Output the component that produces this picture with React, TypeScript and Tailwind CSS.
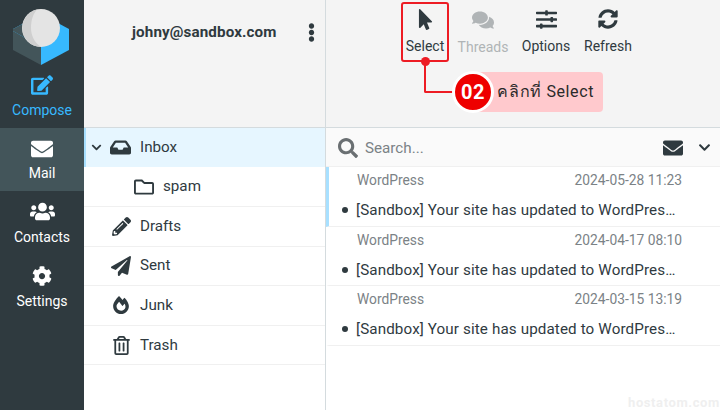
import React from "react";
import {
  FaEdit,
  FaEnvelope,
  FaUsers,
  FaCog,
  FaInbox,
  FaRegFolder,
  FaPencilAlt,
  FaPaperPlane,
  FaFireAlt,
  FaRegTrashAlt,
  FaMousePointer,
  FaComments,
  FaSlidersH,
  FaSyncAlt,
  FaSearch,
  FaChevronDown,
  FaEllipsisV,
} from "react-icons/fa";

const folders = [
  { name: "Drafts", icon: FaPencilAlt, size: 19 },
  { name: "Sent", icon: FaPaperPlane, size: 20 },
  { name: "Junk", icon: FaFireAlt, size: 18 },
  { name: "Trash", icon: FaRegTrashAlt, size: 19 },
];

const messages = [
  { date: "2024-05-28 11:23", selected: true },
  { date: "2024-04-17 08:10", selected: false },
  { date: "2024-03-15 13:19", selected: false },
];

const Logo = () => (
  <svg width="84" height="62" viewBox="0 0 84 62" className="block">
    <path d="M13 25 L41 40 L41 61 L13 46 Z" fill="#43555a" />
    <path d="M69 25 L41 40 L41 61 L69 46 Z" fill="#37b9ff" />
    <path d="M41 43 L13 27 L13 25 L41 10 L69 25 L69 27 Z" fill="#37b9ff" />
    <path d="M41 43 L13 27 L13 25 L30 16 L41 30 Z" fill="#43555a" />
    <circle cx="41" cy="24" r="19" fill="#e4e4e4" />
    <path d="M37 5.5 A19 19 0 0 0 41 43 C34 38 31 31 31 24 C31 16 33 10 37 5.5 Z" fill="#cfcfcf" />
  </svg>
);

export default function App() {
  return (
    <div className="relative flex h-[410px] w-[720px] overflow-hidden bg-white font-['Roboto',sans-serif] text-[#2f3a3f]">
      {/* Sidebar */}
      <div className="flex w-[84px] shrink-0 flex-col bg-[#2f3a3f] pt-[4px] text-white">
        <Logo />
        <div className="mt-[8px] flex h-[54px] flex-col items-center text-[#37b9ff]">
          <FaEdit size={22} />
          <span className="mt-[4px] text-[14px] leading-[20px]">Compose</span>
        </div>
        <div className="flex h-[63px] flex-col items-center bg-[#43555a] pt-[10px]">
          <FaEnvelope size={22} />
          <span className="mt-[3px] text-[14px] leading-[20px]">Mail</span>
        </div>
        <div className="flex h-[64px] flex-col items-center pt-[8px]">
          <FaUsers size={25} />
          <span className="mt-[3px] text-[14px] leading-[20px]">Contacts</span>
        </div>
        <div className="flex flex-col items-center pt-[11px]">
          <FaCog size={20} />
          <span className="mt-[5px] text-[14px] leading-[20px]">Settings</span>
        </div>
      </div>

      {/* Folder column */}
      <div className="flex w-[242px] shrink-0 flex-col border-r border-[#d4dbde]">
        <div className="flex h-[128px] shrink-0 border-b border-[#d4dbde] bg-[#f4f4f4]">
          <div className="flex h-[64px] flex-1 items-center justify-between pl-[48px] pr-[4px]">
            <span className="pt-[1px] text-[15.2px] font-bold leading-none tracking-[0.12px]">johny@sandbox.com</span>
            <FaEllipsisV size={19} className="mt-[1px]" />
          </div>
        </div>
        <div className="flex h-[39px] items-center border-l-[2px] border-[#a8e0ff] bg-[#e6f6ff] pl-[5px]">
          <FaChevronDown size={11} />
          <FaInbox size={21} className="ml-[8px]" />
          <span className="ml-[9px] text-[15.2px]">Inbox</span>
        </div>
        <div className="flex h-[40px] items-center border-b border-[#f0f0f0] pl-[50px]">
          <FaRegFolder size={20} />
          <span className="ml-[9px] text-[15.2px]">spam</span>
        </div>
        {folders.map((f) => (
          <div key={f.name} className="flex h-[39.6px] items-center border-b border-[#f0f0f0]">
            <span className="flex w-[56px] justify-center pl-[18px]">
              <f.icon size={f.size} />
            </span>
            <span className="text-[15.2px]">{f.name}</span>
          </div>
        ))}
      </div>

      {/* Message column */}
      <div className="flex min-w-0 flex-1 flex-col">
        <div className="flex h-[128px] shrink-0 justify-center gap-[14px] border-b border-[#d4dbde] bg-[#f4f4f4] pl-[2px] pr-[10px] pt-[9px]">
          <div className="flex w-[38px] flex-col items-center">
            <FaMousePointer size={21} />
            <span className="mt-[6px] text-[14px] leading-[20px]">Select</span>
          </div>
          <div className="flex w-[50px] flex-col items-center text-[#b0b4b6]">
            <FaComments size={22} />
            <span className="mt-[6px] text-[14px] leading-[20px]">Threads</span>
          </div>
          <div className="flex w-[48px] flex-col items-center">
            <FaSlidersH size={21} />
            <span className="mt-[6px] text-[14px] leading-[20px]">Options</span>
          </div>
          <div className="flex w-[48px] flex-col items-center">
            <FaSyncAlt size={20} />
            <span className="mt-[7px] text-[14px] leading-[20px]">Refresh</span>
          </div>
        </div>

        <div className="flex h-[39px] shrink-0 items-center border-b border-[#f0f0f0] bg-[#fafafa] pl-[12px] pr-[9px] pt-[1px]">
          <FaSearch size={20} className="text-[#6a6f72]" />
          <span className="ml-[7px] flex-1 pt-[1px] text-[15.2px] text-[#7b8286]">Search...</span>
          <FaEnvelope size={20} />
          <FaChevronDown size={13} className="ml-[15px]" />
        </div>

        {messages.map((m) => (
          <div
            key={m.date}
            className={`h-[59.7px] border-b border-[#f0f0f0] border-l-[3px] pr-[38px] ${
              m.selected ? "border-l-[#a8e0ff]" : "border-l-transparent"
            }`}
          >
            <div className="flex justify-between pl-[28px] pt-[3px] text-[13.8px] leading-[20px] text-[#7b8286]">
              <span>WordPress</span>
              <span>{m.date}</span>
            </div>
            <div className="mt-[10px] flex items-center pl-[13px] text-[15.2px] leading-[20px] tracking-[0.12px]">
              <span className="h-[6px] w-[6px] shrink-0 rounded-full bg-[#2f3a3f]" />
              <span className="ml-[8px] whitespace-nowrap">[Sandbox] Your site has updated to WordPres…</span>
            </div>
          </div>
        ))}
      </div>

      {/* Tutorial annotation */}
      <div className="absolute left-[401px] top-[2px] h-[60px] w-[48px] rounded-[3px] border-[2px] border-[#ed1c24]" />
      <div className="absolute left-[421px] top-[57px] h-[9px] w-[9px] rounded-full bg-[#ed1c24]" />
      <div className="absolute left-[424px] top-[62px] h-[31px] w-[40px] rounded-bl-[2px] border-b-[2px] border-l-[2px] border-[#ed1c24]" />
      <div className="absolute left-[470px] top-[72px] flex h-[40px] w-[133px] items-center justify-end rounded-[4px] bg-[#ffc9cd] pr-[9px] font-['Roboto','Noto_Sans',sans-serif] text-[16px] tracking-[0.6px] text-[#2a2a2a]">
        คลิกที่ Select
      </div>
      <div className="absolute left-[452px] top-[71px] flex h-[42px] w-[42px] items-center justify-center rounded-full border-[3px] border-white bg-[#ee0000] text-[20px] font-bold tracking-[0.5px] text-white">
        02
      </div>

      <span className="absolute left-[628px] top-[396px] text-[13px] font-bold leading-none tracking-[0.6px] text-[#efefef]">
        hostatom.com
      </span>
    </div>
  );
}
